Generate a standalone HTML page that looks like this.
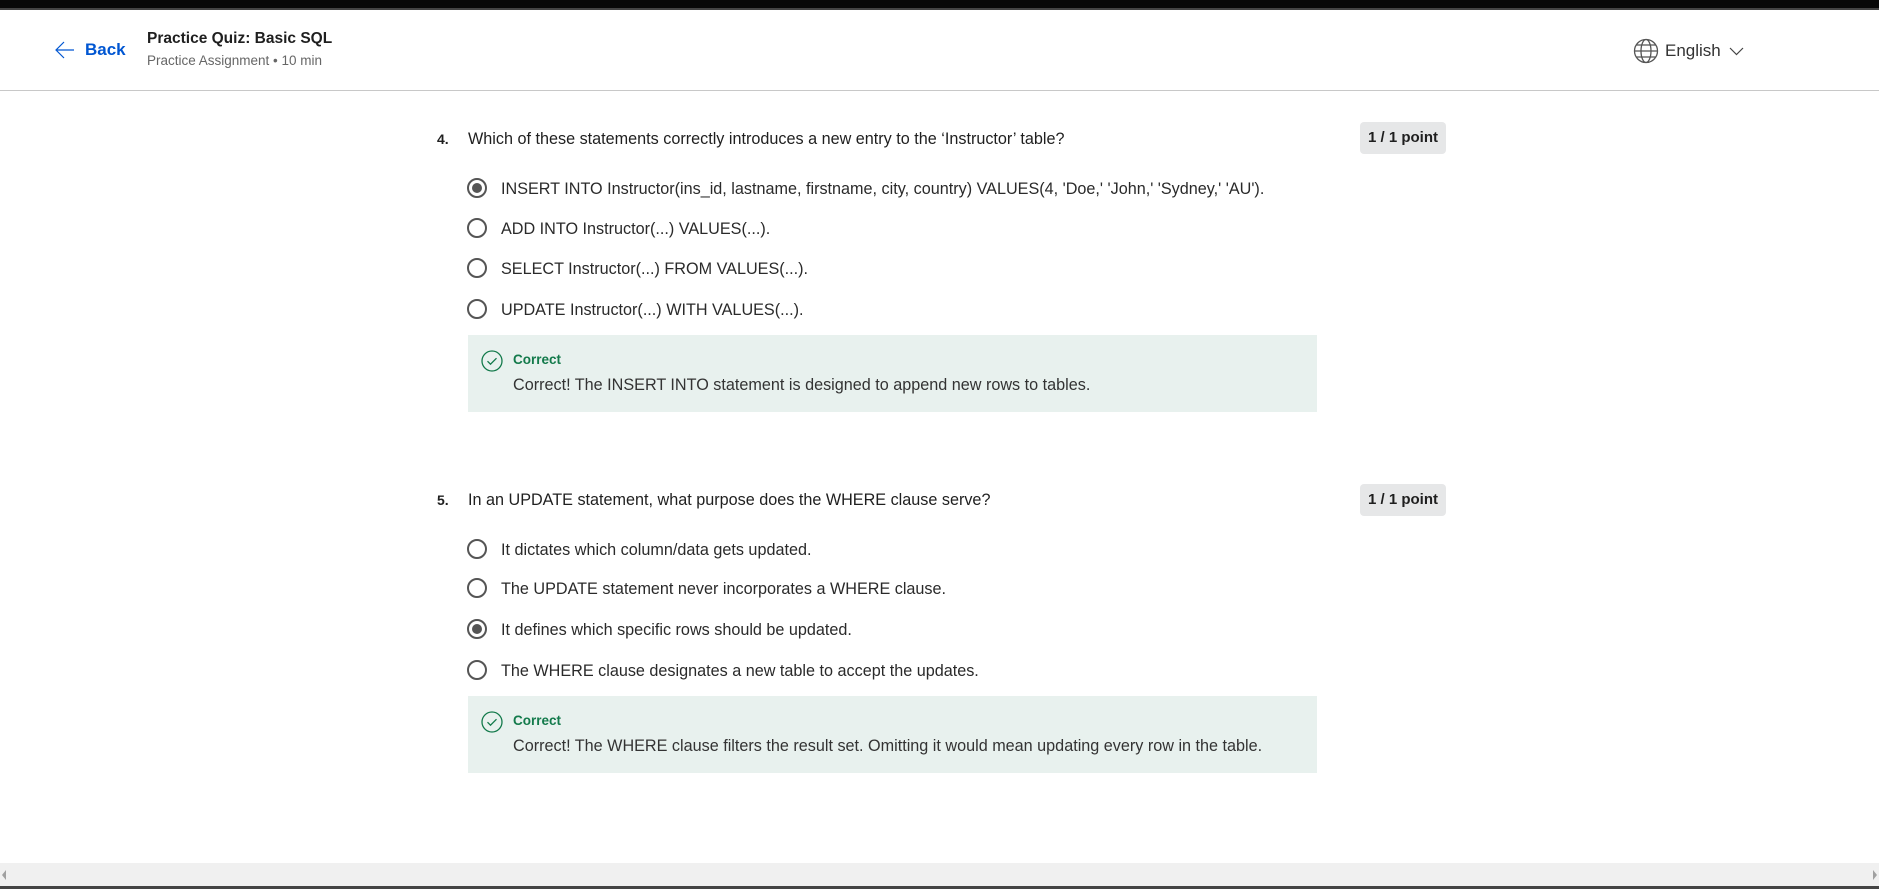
<!DOCTYPE html>
<html><head><meta charset="utf-8"><style>
*{margin:0;padding:0;box-sizing:border-box}
body{width:1879px;height:889px;position:relative;background:#fff;font-family:"Liberation Sans",sans-serif;color:#1f1f1f;overflow:hidden}
.a{position:absolute;white-space:nowrap}
.topbar{left:0;top:0;width:1879px;height:8px;background:#080808}
.topline{left:0;top:8px;width:1879px;height:2px;background:#444}
.hdr{left:0;top:90px;width:1879px;height:1px;background:#c8c8c8}
.q{font-size:16.2px;line-height:20px}
.opt{font-size:16.2px;line-height:20px;color:#2a2a2a}
.radio{width:20px;height:20px;border:2px solid #555;border-radius:50%}
.radio.on::after{content:"";position:absolute;left:3px;top:3px;width:10px;height:10px;border-radius:50%;background:#555}
.badge{background:#e6e7e8;border-radius:4px;font-size:15px;font-weight:bold;line-height:32px;text-align:center;width:86px;height:32px}
.fb{background:#e8f1ee;width:849px}
.ok{color:#137a4b;font-weight:bold;font-size:13.5px}
.ft{font-size:16.2px;color:#333}
</style></head><body>
<div class="a topbar"></div><div class="a topline"></div>
<svg class="a" style="left:54px;top:40px" width="22" height="20" viewBox="0 0 22 20"><path d="M20 10H3M10 2L2 10l8 8" fill="none" stroke="#0056d2" stroke-width="1.2"/></svg>
<div class="a" style="left:85px;top:40px;font-size:17px;font-weight:bold;color:#0056d2">Back</div>
<div class="a" style="left:147px;top:30px;font-size:15.5px;font-weight:bold;color:#1f1f1f">Practice Quiz: Basic SQL</div>
<div class="a" style="left:147px;top:53px;font-size:13.5px;color:#666">Practice Assignment • 10 min</div>
<svg class="a" style="left:1633px;top:38px" width="26" height="26" viewBox="0 0 26 26" fill="none" stroke="#555" stroke-width="1.3"><circle cx="13" cy="13" r="11.5"/><ellipse cx="13" cy="13" rx="5" ry="11.5"/><path d="M1.5 13h23M3.5 7h19M3.5 19h19"/></svg>
<div class="a" style="left:1665px;top:41px;font-size:17px;color:#333">English</div>
<svg class="a" style="left:1729px;top:46px" width="15" height="10" viewBox="0 0 15 10"><path d="M1 2l6.5 6.5L14 2" fill="none" stroke="#444" stroke-width="1.2"/></svg>
<div class="a hdr"></div>

<div class="a q" style="left:437px;top:129px;font-weight:bold;font-size:14px">4.</div>
<div class="a q" style="left:468px;top:129px">Which of these statements correctly introduces a new entry to the ‘Instructor’ table?</div>
<div class="a badge" style="left:1360px;top:122px">1 / 1 point</div>
<div class="a radio on" style="left:467px;top:178px"></div>
<div class="a opt" style="left:501px;top:179px">INSERT INTO Instructor(ins_id, lastname, firstname, city, country) VALUES(4, 'Doe,' 'John,' 'Sydney,' 'AU').</div>
<div class="a radio" style="left:467px;top:218px"></div>
<div class="a opt" style="left:501px;top:219px">ADD INTO Instructor(...) VALUES(...).</div>
<div class="a radio" style="left:467px;top:258px"></div>
<div class="a opt" style="left:501px;top:259px">SELECT Instructor(...) FROM VALUES(...).</div>
<div class="a radio" style="left:467px;top:299px"></div>
<div class="a opt" style="left:501px;top:300px">UPDATE Instructor(...) WITH VALUES(...).</div>
<div class="a fb" style="left:468px;top:335px;height:77px"></div>
<svg class="a" style="left:481px;top:350px" width="22" height="22" viewBox="0 0 22 22" fill="none" stroke="#137a4b" stroke-width="1.3"><circle cx="11" cy="11" r="10"/><path d="M6.5 11.2l3 3 6-6"/></svg>
<div class="a ok" style="left:513px;top:352px">Correct</div>
<div class="a ft" style="left:513px;top:376px">Correct! The INSERT INTO statement is designed to append new rows to tables.</div>

<div class="a q" style="left:437px;top:490px;font-weight:bold;font-size:14px">5.</div>
<div class="a q" style="left:468px;top:490px">In an UPDATE statement, what purpose does the WHERE clause serve?</div>
<div class="a badge" style="left:1360px;top:484px">1 / 1 point</div>
<div class="a radio" style="left:467px;top:539px"></div>
<div class="a opt" style="left:501px;top:540px">It dictates which column/data gets updated.</div>
<div class="a radio" style="left:467px;top:578px"></div>
<div class="a opt" style="left:501px;top:579px">The UPDATE statement never incorporates a WHERE clause.</div>
<div class="a radio on" style="left:467px;top:619px"></div>
<div class="a opt" style="left:501px;top:620px">It defines which specific rows should be updated.</div>
<div class="a radio" style="left:467px;top:660px"></div>
<div class="a opt" style="left:501px;top:661px">The WHERE clause designates a new table to accept the updates.</div>
<div class="a fb" style="left:468px;top:696px;height:77px"></div>
<svg class="a" style="left:481px;top:711px" width="22" height="22" viewBox="0 0 22 22" fill="none" stroke="#137a4b" stroke-width="1.3"><circle cx="11" cy="11" r="10"/><path d="M6.5 11.2l3 3 6-6"/></svg>
<div class="a ok" style="left:513px;top:713px">Correct</div>
<div class="a ft" style="left:513px;top:737px">Correct! The WHERE clause filters the result set. Omitting it would mean updating every row in the table.</div>

<div class="a" style="left:0;top:863px;width:1879px;height:23px;background:#f0f0f0"></div>
<div class="a" style="left:2px;top:870px;width:0;height:0;border-top:5px solid transparent;border-bottom:5px solid transparent;border-right:4px solid #a0a0a0"></div>
<div class="a" style="left:1873px;top:870px;width:0;height:0;border-top:5px solid transparent;border-bottom:5px solid transparent;border-left:4px solid #a0a0a0"></div>
<div class="a" style="left:0;top:886px;width:1879px;height:3px;background:#444"></div>
</body></html>
